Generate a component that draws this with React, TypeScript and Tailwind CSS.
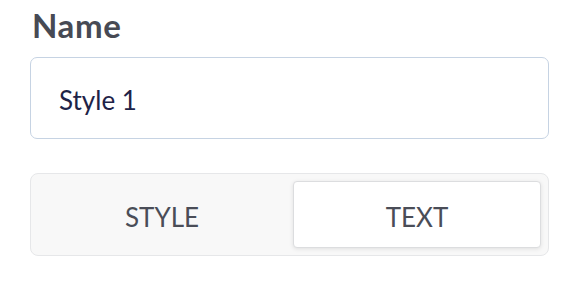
import { useState } from 'react'

export default function App() {
  const [tab, setTab] = useState<'style' | 'text'>('text')

  const active =
    'flex-1 rounded-[4px] border border-[#dcdddf] bg-white pt-[5px] text-[26px] text-[#4a4d57] shadow-[0_1px_4px_rgba(0,0,0,0.1)]'
  const idle = 'flex-1 rounded-[4px] pt-[5px] text-[26px] text-[#4a4d57]'

  return (
    <div className="h-[284px] w-[564px] bg-white pl-[30px] pr-[15px] pt-[4px] font-['Lato',sans-serif]">
      <label className="block pl-[2px] text-[33px] font-bold leading-[42px] tracking-[0.6px] text-[#474a54]">Name</label>
      <input
        defaultValue="Style 1"
        className="mt-[11px] h-[82px] w-[519px] rounded-[7px] border-[1.5px] border-[#c6d3e3] px-[28px] pt-[3px] text-[26px] text-[#1e2347] outline-none"
      />
      <div className="mt-[34px] flex h-[83px] w-[519px] gap-[8px] rounded-[8px] border border-[#e6e7e9] bg-[#f8f8f8] p-[7px] pl-[8px]">
        <button onClick={() => setTab('style')} className={tab === 'style' ? active : idle}>
          STYLE
        </button>
        <button onClick={() => setTab('text')} className={tab === 'text' ? active : idle}>
          TEXT
        </button>
      </div>
    </div>
  )
}
